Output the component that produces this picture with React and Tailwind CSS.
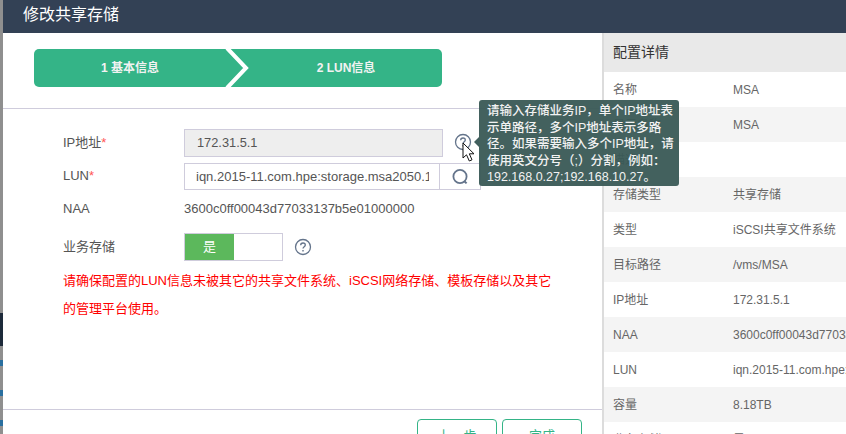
/**
 * Edit shared storage dialog, step 2 (LUN info) with the config details panel
 */

const details = [
  ['名称', 'MSA'],
  ['显示名称', 'MSA'],
  ['描述', ''],
  ['存储类型', '共享存储'],
  ['类型', 'iSCSI共享文件系统'],
  ['目标路径', '/vms/MSA'],
  ['IP地址', '172.31.5.1'],
  ['NAA', '3600c0ff00043d77033137b5e01000000'],
  ['LUN', 'iqn.2015-11.com.hpe:storage.msa2050.1'],
  ['容量', '8.18TB'],
  ['业务存储', '是'],
];

const tipLines = [
  '请输入存储业务IP，单个IP地址表',
  '示单路径，多个IP地址表示多路',
  '径。如果需要输入多个IP地址，请',
  '使用英文分号（;）分割，例如：',
  '192.168.0.27;192.168.10.27。',
];

function HelpIcon() {
  return (
    <svg width="18" height="18" viewBox="0 0 18 18" fill="none" className="shrink-0">
      <circle cx="9" cy="9" r="7.5" stroke="#64748b" strokeWidth="1.3" />
      <path d="M6.7 7.2c0-1.4 1-2.2 2.3-2.2s2.3.8 2.3 2c0 1.7-2.3 1.8-2.3 3.6" stroke="#64748b" strokeWidth="1.3" />
      <rect x="8.3" y="12" width="1.4" height="1.5" fill="#64748b" />
    </svg>
  );
}

function SearchIcon() {
  return (
    <svg width="20" height="20" viewBox="0 0 20 20" fill="none">
      <circle cx="10" cy="9.5" r="6.6" stroke="#64748b" strokeWidth="1.8" />
      <path d="M14.4 14.2L16.6 16.4" stroke="#64748b" strokeWidth="2" />
    </svg>
  );
}

function Label({ children, required }) {
  return (
    <div className="w-[121px] shrink-0 pb-[1px] text-[13px] text-[#555]">
      {children}
      {required && <span className="text-[#f55]">*</span>}
    </div>
  );
}

export default function App() {
  return (
    <div
      className="flex h-[434px] w-[846px] overflow-hidden bg-white"
      style={{ fontFamily: '"Liberation Sans", "Noto Sans CJK SC", sans-serif' }}
    >
      {/* Dimmed page behind the dialog */}
      <div className="flex w-[3px] shrink-0 flex-col bg-[#8f8f8f]">
        <div className="mt-[313px] h-[33px] bg-[#1d2a3a]" />
        <div className="mt-[14px] h-[6px] bg-[#2a6f9f]" />
        <div className="mt-[24px] h-[6px] bg-[#2a6f9f]" />
        <div className="mt-[24px] h-[6px] bg-[#2a6f9f]" />
      </div>

      <div className="relative flex min-w-0 flex-1 flex-col">
        {/* Header */}
        <div className="flex h-[33px] shrink-0 items-center bg-[#334155] pb-[4px] pl-[20px] text-[16px] text-white">
          修改共享存储
        </div>

        <div className="flex min-h-0 flex-1">
          {/* Left: form */}
          <div className="flex w-[599px] shrink-0 flex-col">
            <div className="h-[76px] shrink-0 border-b border-[#cfccdc] pl-[31px] pt-[16px]">
              <div className="relative flex h-[38px] w-[408px] overflow-hidden rounded-[5px] bg-[#34b487] text-[12px] font-bold text-[#f2f2f2]">
                <div className="flex w-[204px] items-center justify-center pr-[12px]">1 基本信息</div>
                <div className="flex w-[204px] items-center justify-center pl-[12px]">2 LUN信息</div>
                <svg width="28" height="38" viewBox="0 0 28 38" className="absolute left-[191px] top-0">
                  <path d="M2 -1L21 19L2 39" fill="none" stroke="#fff" strokeWidth="4" />
                </svg>
              </div>
            </div>

            <div className="h-[300px] shrink-0 pl-[60px] pt-[20px]">
              <div className="flex h-[28px] items-center">
                <Label required>IP地址</Label>
                <div className="flex h-[28px] w-[259px] items-center border border-[#cfccdc] bg-[#eeeeee] pl-[12px] text-[12.8px] text-[#555]">
                  172.31.5.1
                </div>
                <div className="ml-[11px] mb-[2px]">
                  <HelpIcon />
                </div>
              </div>

              <div className="mt-[6px] flex h-[27px] items-center">
                <Label required>LUN</Label>
                <div className="h-[27px] w-[256px] border border-[#cfccdc] pl-[11px] pr-[10px] text-[13px] leading-[25px] text-[#555]">
                  <div className="overflow-hidden whitespace-nowrap">iqn.2015-11.com.hpe:storage.msa2050.1</div>
                </div>
                <div className="flex h-[27px] w-[41px] items-center justify-center border border-l-0 border-[#cfccdc]">
                  <SearchIcon />
                </div>
              </div>

              <div className="mt-[9px] flex h-[20px] items-center">
                <Label>NAA</Label>
                <div className="text-[13px] text-[#555]">3600c0ff00043d77033137b5e01000000</div>
              </div>

              <div className="mt-[14px] flex h-[28px] items-center">
                <Label>业务存储</Label>
                <div className="flex h-[28px] w-[99px] border border-[#cfccdc] bg-white">
                  <div className="flex w-[49px] items-center justify-center bg-[#5cb85c] text-[13px] text-white">是</div>
                </div>
                <div className="ml-[11px]">
                  <HelpIcon />
                </div>
              </div>

              <div className="mt-[6px] w-[492px] text-[13px] leading-[28px] text-[#ff0000]">
                请确保配置的LUN信息未被其它的共享文件系统、iSCSI网络存储、模板存储以及其它的管理平台使用。
              </div>
            </div>

            {/* Footer buttons, cut off by the window edge */}
            <div className="flex flex-1 justify-end gap-[5px] border-t border-[#cfccdc] pr-[20px] pt-[9px]">
              <div className="h-[32px] w-[80px] rounded-[4px] border border-[#34b487] pt-[6px] text-center text-[13px] text-[#34b487]">
                上一步
              </div>
              <div className="h-[32px] w-[80px] rounded-[4px] border border-[#34b487] pt-[6px] text-center text-[13px] text-[#34b487]">
                完成
              </div>
            </div>
          </div>

          {/* Right: config details */}
          <div className="min-w-0 flex-1 border-l-2 border-[#dcdcdc]">
            <div className="flex h-[39px] items-center bg-[#e9e9e9] pl-[9px] text-[14px] text-[#333]">配置详情</div>
            {details.map(([name, value], i) => (
              <div
                key={name}
                className={`flex h-[35px] items-center whitespace-nowrap text-[12px] text-[#666] ${i % 2 === 1 ? 'bg-[#f4f4f4]' : 'bg-white'}`}
              >
                <div className="w-[129px] shrink-0 pl-[9px]">{name}</div>
                <div>{value}</div>
              </div>
            ))}
          </div>
        </div>

        {/* Tooltip over the form */}
        <div className="absolute left-[476px] top-[100px] h-[86px] w-[200px] rounded-[3px] bg-[#395855]/95 pl-[8px] pt-[3px] text-[12.5px] font-medium leading-[16.5px] text-[#f2f2f2]">
          <div className="absolute -left-[5px] top-[37px] h-0 w-0 border-y-[5px] border-r-[5px] border-y-transparent border-r-[#415f5d]" />
          {tipLines.map((line) => (
            <div key={line} className="whitespace-nowrap">
              {line}
            </div>
          ))}
        </div>

        {/* Mouse cursor */}
        <svg width="14" height="21" viewBox="0 0 14 21" className="absolute left-[459px] top-[142px]">
          <path d="M1 1V16L4.5 12.8L7.3 19L10 17.8L7.3 11.8H12Z" fill="#fff" stroke="#111" strokeWidth="1" />
        </svg>
      </div>
    </div>
  );
}
